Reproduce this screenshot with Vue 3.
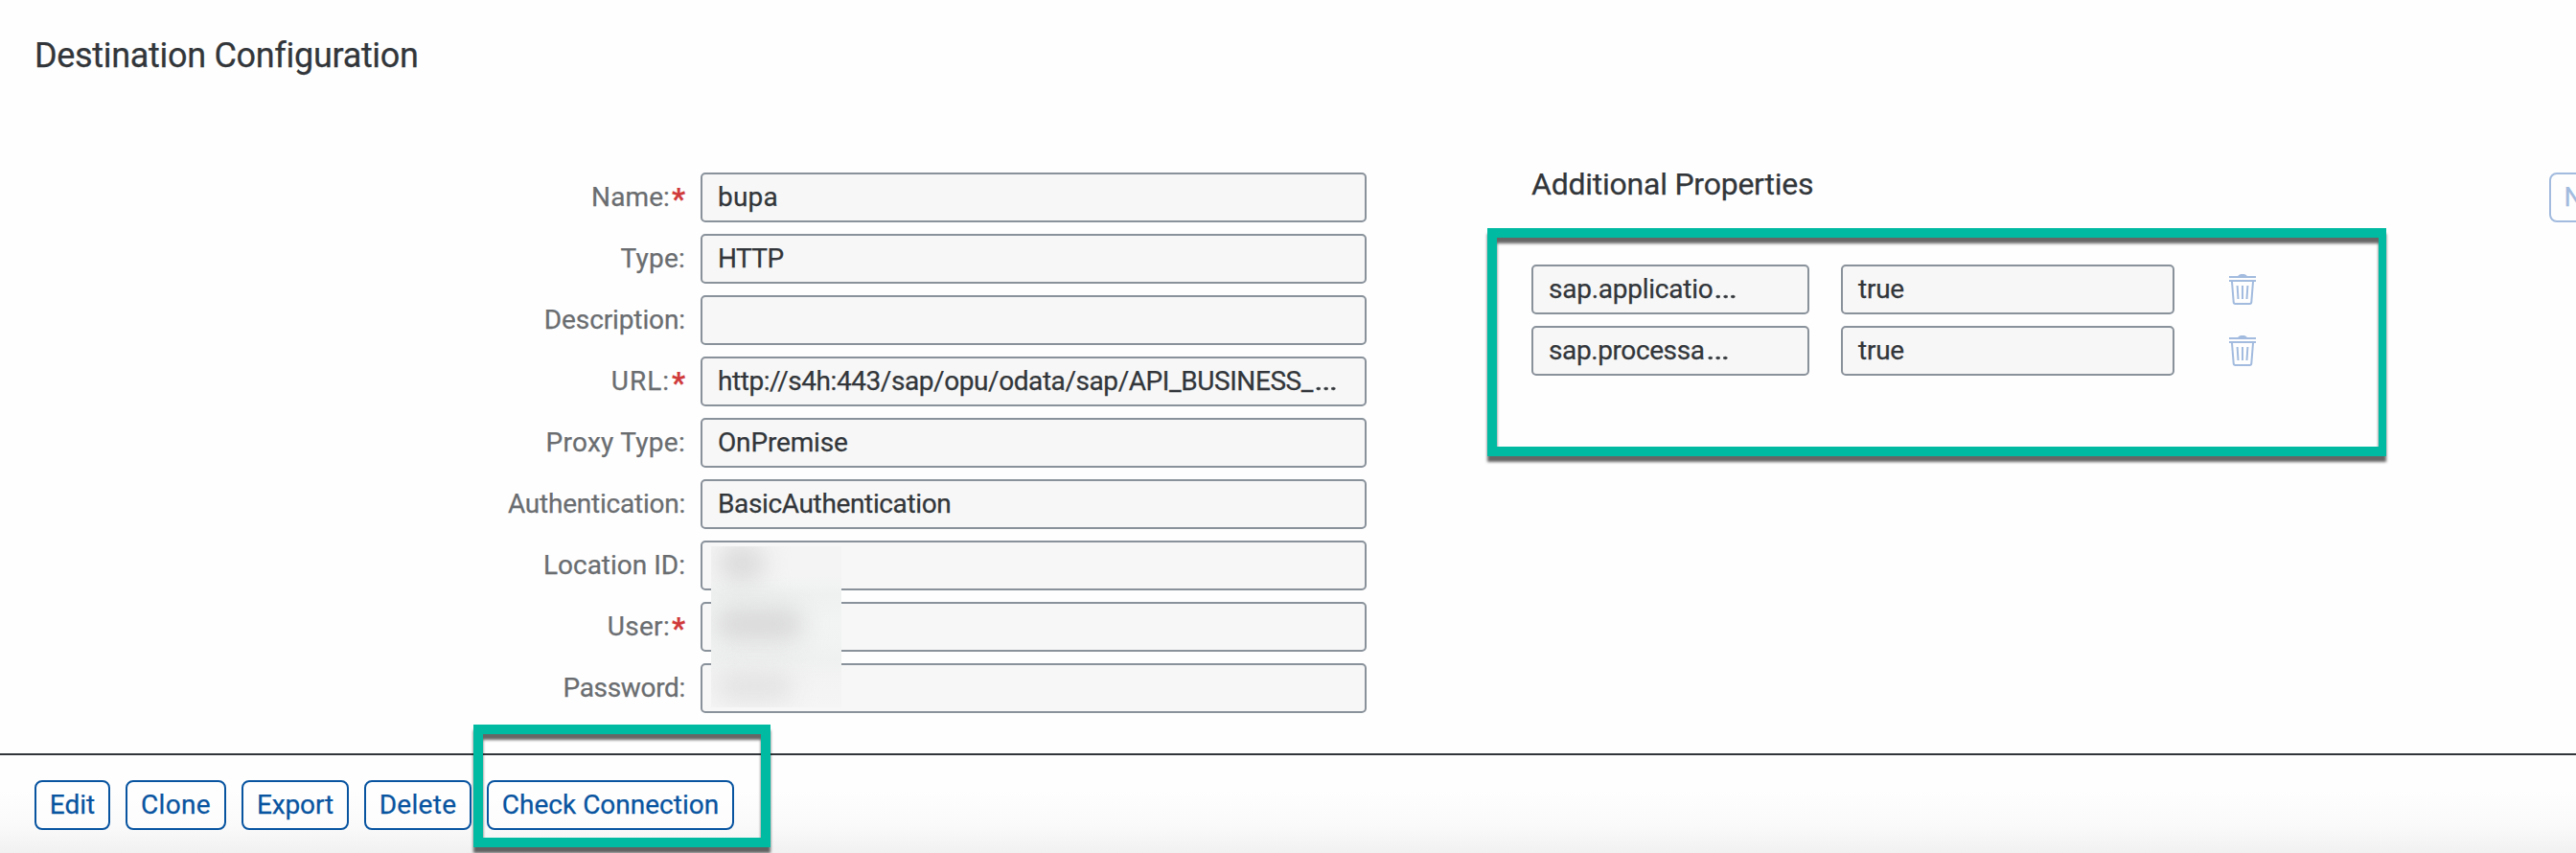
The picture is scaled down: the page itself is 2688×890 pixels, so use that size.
<script setup>
const fields = [
  { label: 'Name:', required: true, value: 'bupa', cls: 'f-name' },
  { label: 'Type:', value: 'HTTP', cls: 'f-type' },
  { label: 'Description:', value: '', cls: 'f-desc' },
  { label: 'URL:', required: true, value: 'http://s4h:443/sap/opu/odata/sap/API_BUSINESS_', cut: true, cls: 'f-url' },
  { label: 'Proxy Type:', value: 'OnPremise', cls: 'f-proxy' },
  { label: 'Authentication:', value: 'BasicAuthentication', cls: 'f-auth' },
  { label: 'Location ID:', value: '', cls: 'f-loc' },
  { label: 'User:', required: true, value: '', cls: 'f-user' },
  { label: 'Password:', value: '', cls: 'f-pass' }
]
const properties = [
  { key: 'sap.applicatio', value: 'true', cls: 'p-app' },
  { key: 'sap.processa', value: 'true', cls: 'p-proc' }
]
const actions = [
  { text: 'Edit', cls: 'b-edit' },
  { text: 'Clone', cls: 'b-clone' },
  { text: 'Export', cls: 'b-export' },
  { text: 'Delete', cls: 'b-delete' },
  { text: 'Check Connection', cls: 'b-check' }
]
</script>

<template>
  <div class="page">
    <header class="header">
      <h1>Destination Configuration</h1>
    </header>

    <main class="content">
      <section class="form">
        <div v-for="f in fields" :key="f.label" class="row" :class="f.cls">
          <label class="label"><span class="label-text">{{ f.label }}</span><span v-if="f.required" class="star">*</span></label>
          <div class="input"><span class="value">{{ f.value }}</span><span v-if="f.cut" class="dots">…</span></div>
        </div>
        <div class="redacted">
          <i class="smudge s1"></i>
          <i class="smudge s2"></i>
          <i class="smudge s3"></i>
        </div>
      </section>

      <section class="props">
        <div class="props-head">
          <h2>Additional Properties</h2>
          <button class="new" type="button">N</button>
        </div>
        <div v-for="p in properties" :key="p.key" class="prop" :class="p.cls">
          <div class="input key"><span class="value">{{ p.key }}</span><span class="dots">…</span></div>
          <div class="input val"><span class="true">{{ p.value }}</span></div>
          <svg class="trash" width="28" height="32" viewBox="0 0 28 32" fill="none" stroke="#a2bbde">
            <path d="M9 2.200C10 .6 11.500 0 14 0s4 .6 5 2.200z" fill="#a2bbde" stroke="none" />
            <path d="M0 3h28M0 7h28" stroke-width="2" />
            <path d="M3 8l1.700 21.200c.1 1.200.7 1.800 1.800 1.800h15c1.100 0 1.700-.6 1.800-1.800L25 8" stroke-width="2" />
            <path d="M8.600 12l.9 14M14 12v14M19.400 12l-.9 14" stroke-width="2" />
          </svg>
        </div>
      </section>
    </main>

    <footer class="footer">
      <button v-for="a in actions" :key="a.text" class="btn" :class="a.cls" type="button">{{ a.text }}</button>
    </footer>

    <div class="frame frame-props"></div>
    <div class="frame frame-check"></div>
  </div>
</template>

<style>
body {
  margin: 0;
  background: #fefefe;
}
</style>

<style scoped>
.page {
  position: relative;
  display: flex;
  flex-direction: column;
  width: 2688px;
  height: 890px;
  overflow: hidden;
  background: #fefefe;
  color: #32363a;
  font-family: Roboto, "Liberation Sans", sans-serif;
  font-size: 28px;
  -webkit-text-stroke: 0.25px currentColor;
}
.header {
  box-sizing: border-box;
  height: 180px;
  padding: 37px 36px 0;
}
h1, h2 {
  margin: 0;
  font-weight: 400;
}
h1 {
  font-size: 36px;
  line-height: 42px;
  letter-spacing: -0.31px;
}
.content {
  display: flex;
  height: 606px;
}
.form {
  position: relative;
  display: flex;
  flex-direction: column;
  gap: 12px;
  width: 1426px;
  margin-right: 172px;
}
.row {
  display: grid;
  grid-template-columns: 715px 695px;
  column-gap: 16px;
}
.label {
  display: flex;
  justify-content: flex-end;
  line-height: 52px;
  white-space: nowrap;
  color: #6a6d70;
}
.star {
  position: relative;
  top: 2px;
  left: -1px;
  width: 13px;
  margin-left: 3px;
  color: #d03a3a;
  font-size: 31px;
  font-weight: 700;
}
.input {
  box-sizing: border-box;
  display: flex;
  height: 52px;
  padding-left: 16px;
  border: 2px solid #89919a;
  border-radius: 5px;
  background: #f7f7f7;
  line-height: 48px;
  white-space: nowrap;
}
.dots {
  margin-left: 1px;
  transform: scaleX(1.33);
  transform-origin: left;
}

.f-name .label-text { letter-spacing: 0.1px; }
.f-name .value { letter-spacing: 0.2px; }
.f-type .label-text { letter-spacing: 0.24px; }
.f-type .value { letter-spacing: -0.6px; }
.f-desc .label-text { letter-spacing: -0.11px; }
.f-url .label-text { letter-spacing: 1px; }
.f-url .value { letter-spacing: -0.43px; }
.f-proxy .label-text { letter-spacing: 0.28px; }
.f-proxy .value { letter-spacing: -0.15px; }
.f-auth .label-text { letter-spacing: -0.23px; }
.f-auth .value { letter-spacing: -0.36px; }
.f-user .label-text { letter-spacing: 0.3px; }
.f-pass .label-text { letter-spacing: -0.33px; }

.redacted {
  position: absolute;
  left: 742px;
  top: 390px;
  width: 136px;
  height: 168px;
  overflow: hidden;
  background: linear-gradient(180deg, #f4f4f4 0%, #f4f4f4 18%, #eff1f1 30%, #f2f3f3 48%, #f1f2f2 60%, #eff0f0 70%, #f3f3f3 82%, #f5f5f5 100%);
}
.smudge {
  position: absolute;
  border-radius: 18px;
  filter: blur(12px);
}
.s1 { left: 8px; top: -2px; width: 48px; height: 40px; background: #dbdbdb; }
.s2 { left: 4px; top: 62px; width: 92px; height: 38px; background: #dadada; }
.s3 { left: 5px; top: 130px; width: 80px; height: 32px; background: #e3e3e3; }

.props {
  flex: none;
  width: 1090px;
}
.props-head {
  display: flex;
  justify-content: space-between;
  align-items: flex-start;
  height: 96px;
}
h2 {
  margin-top: -7px;
  font-size: 32px;
  line-height: 38px;
  letter-spacing: -0.24px;
}
.prop {
  display: flex;
  align-items: center;
  margin-bottom: 12px;
}
.key { width: 290px; margin-right: 33px; }
.val { width: 348px; margin-right: 56.500px; }
.p-app .key .value { letter-spacing: -0.25px; }
.p-proc .key .value { letter-spacing: -0.4px; }
.true { letter-spacing: -0.26px; }
.trash {
  display: block;
}

.btn, .new {
  box-sizing: border-box;
  height: 52px;
  padding: 0;
  border: 2px solid #0854a0;
  border-radius: 8px;
  background: transparent;
  color: #0854a0;
  font: inherit;
  line-height: 48px;
  text-align: center;
  white-space: nowrap;
}
.new {
  flex: none;
  width: 60px;
  margin-right: -32px;
  padding-left: 13.500px;
  border-color: #a2bbde;
  color: #a2bbde;
  text-align: left;
}
.footer {
  box-sizing: border-box;
  display: flex;
  gap: 16px;
  height: 104px;
  padding: 26px 36px 0;
  border-top: 2px solid #32363a;
  background: linear-gradient(180deg, #fefefe 0%, #fefefe 35%, #fafafa 72%, #f1f1f1 100%);
}
.btn { background: rgba(255, 255, 255, 0.45); }
.b-edit { width: 79px; }
.b-clone { width: 105px; letter-spacing: 0.3px; }
.b-export { width: 112px; letter-spacing: -0.13px; }
.b-delete { width: 112px; letter-spacing: 0.3px; }
.b-check { width: 258px; }

.frame {
  position: absolute;
  box-sizing: border-box;
  border: 10px solid #00baa2;
  filter: drop-shadow(0 6px 1.500px rgba(0, 0, 0, 0.6));
}
.frame-props {
  left: 1552px;
  top: 238px;
  width: 938px;
  height: 238px;
  border-right-width: 8px;
}
.frame-check {
  left: 494px;
  top: 756px;
  width: 310px;
  height: 128px;
}
</style>
